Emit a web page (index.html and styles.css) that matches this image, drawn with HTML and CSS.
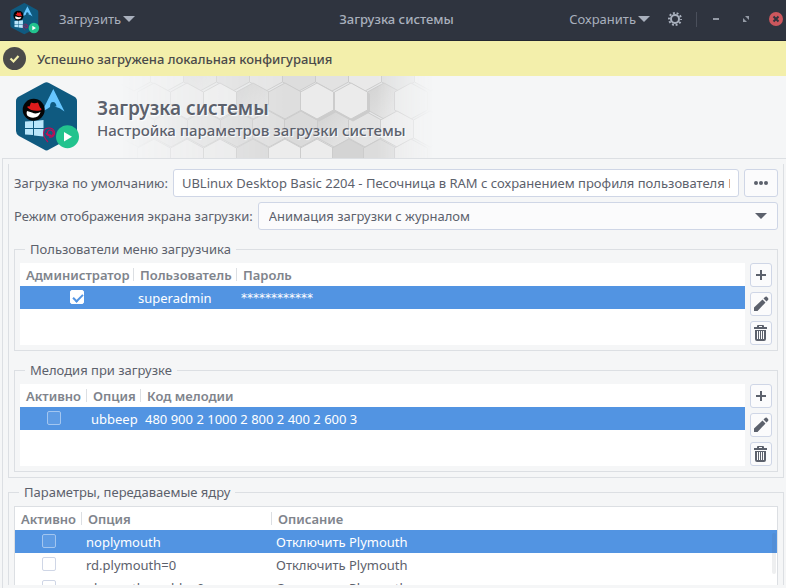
FILE: index.html
```html
<!DOCTYPE html>
<html lang="ru">
<head>
  <meta charset="UTF-8">
  <meta name="viewport" content="width=device-width, initial-scale=1.0">
  <title>Загрузка системы</title>
  <link rel="stylesheet" href="styles.css">
</head>
<body>
  <!-- shared symbols -->
  <svg class="symbols" aria-hidden="true">
    <symbol id="logo" viewBox="0 0 64 70">
      <path d="M28 1Q30.500 -0.500 33 1L58 14.500Q61 16 61 19V49Q61 52 58 54L33 67.500Q30.500 69.500 28 67.500L3 54Q0 52 0 49V19Q0 16 3 14.500Z" fill="#0f5a80"/>
      <path d="M37.300 7L26 29.500Q31 27.500 34 25Q34 20 37 20Q40 20 40.500 24.500L38.500 24.500Q44 25.500 48.500 29.500Z" fill="#66c6ff"/>
      <circle cx="17.700" cy="27.700" r="11" fill="#050505"/>
      <path d="M11 29Q9 34 15 35.500Q23 36.500 24.500 30Q20 32.500 16 30.500Z" fill="#fff"/>
      <path d="M11 25Q12 24 13.500 24.500L15 20.500Q18.500 22 22 20.500L24 25.500Q27 27.500 24 28.500Q16 30 11 25Z" fill="#e01b1b"/>
      <path d="M9 39.500L17 39V46H9ZM18 39L27.500 38V46H18ZM9 47H17V53L9 52.500ZM18 47H27.500V54.500L18 53.500Z" fill="#b9e6fb"/>
      <path d="M35 53Q31 53.500 31.500 50Q33 47 36 48.500Q38.500 51 36 53.500Q32 55 30 51M28 49Q29 45.500 34 46Q39 47 38.500 52Q37 56 33 55M28 49Q26 54 32 60" fill="none" stroke="#c70a53" stroke-width="1.100"/>
      <circle cx="51.500" cy="54.700" r="11.500" fill="#22c38e"/>
      <path d="M48 50V59.500L56 54.700Z" fill="#fff"/>
    </symbol>
    <symbol id="caret" viewBox="0 0 12 6">
      <path d="M0 0H12L6 6Z" fill="currentColor"/>
    </symbol>
    <symbol id="plus" viewBox="0 0 16 16">
      <path d="M7 3H9V7H13V9H9V13H7V9H3V7H7Z" fill="currentColor"/>
    </symbol>
    <symbol id="pencil" viewBox="0 0 16 16">
      <path d="M1 11.500L9.500 3.500L12.500 6.500L4.500 15H1ZM10.500 2.500L12 1Q13.500 0 14.500 1.500Q16 2.500 15 4L13.500 5.500Z" fill="currentColor"/>
    </symbol>
    <symbol id="trash" viewBox="0 0 16 16">
      <path d="M4 2V1Q4 0 5 0H10Q11 0 11 1V2H14V4H1V2ZM6 2H9V1H6ZM2 5H13V14Q13 16 11 16H4Q2 16 2 14ZM4 6V14H5V6ZM6 6V14H7V6ZM8 6V14H9V6ZM10 6V14H11V6Z" fill="currentColor" fill-rule="evenodd"/>
    </symbol>
  </svg>

  <header class="titlebar">
    <div class="titlebar-left">
      <svg class="logo-small" aria-hidden="true"><use href="#logo"/></svg>
      <button type="button" class="menu-btn">Загрузить<svg class="caret"><use href="#caret"/></svg></button>
    </div>
    <h1>Загрузка системы</h1>
    <div class="titlebar-right">
      <button type="button" class="menu-btn">Сохранить<svg class="caret"><use href="#caret"/></svg></button>
      <button type="button" class="icon-btn gear" aria-label="Настройки">
        <svg width="14" height="14" viewBox="0 0 14 14" fill="none" stroke="currentColor">
          <circle cx="7" cy="7" r="4" stroke-width="2"/>
          <circle cx="7" cy="7" r="6" stroke-width="2" stroke-dasharray="1.900 1.870" stroke-dashoffset="0.950"/>
        </svg>
      </button>
      <span class="divider"></span>
      <button type="button" class="icon-btn" aria-label="Свернуть">
        <svg width="14" height="14" viewBox="0 0 14 14"><path d="M4 6H10V8H4Z" fill="#949aa5"/></svg>
      </button>
      <button type="button" class="icon-btn" aria-label="Развернуть">
        <svg width="14" height="14" viewBox="0 0 14 14"><path d="M6 4H10V8ZM4 6L8 10H4Z" fill="#949aa5"/></svg>
      </button>
      <button type="button" class="icon-btn" aria-label="Закрыть">
        <svg width="14" height="14" viewBox="0 0 14 14">
          <circle cx="7" cy="7" r="7" fill="#cc575d"/>
          <path d="M4.500 4.500L9.500 9.500M9.500 4.500L4.500 9.500" stroke="#2f343f" stroke-width="2"/>
        </svg>
      </button>
    </div>
  </header>

  <div class="infobar" role="status">
    <svg width="23" height="23" viewBox="0 0 23 23" aria-hidden="true">
      <circle cx="11.500" cy="11.500" r="11.500" fill="#4a4a4a"/>
      <path d="M7.500 11.500L10.500 14.500L15.500 9" fill="none" stroke="#f3efab" stroke-width="2.200"/>
    </svg>
    <span>Успешно загружена локальная конфигурация</span>
  </div>

  <section class="banner">
    <svg class="honeycomb" width="330" height="82" viewBox="120 0 330 82" aria-hidden="true">
      <defs>
        <linearGradient id="fade">
          <stop offset="0" stop-color="#fff" stop-opacity="0"/>
          <stop offset="0.250" stop-color="#fff" stop-opacity="0.600"/>
          <stop offset="0.500" stop-color="#fff"/>
          <stop offset="0.780" stop-color="#fff"/>
          <stop offset="0.950" stop-color="#fff" stop-opacity="0"/>
        </linearGradient>
        <mask id="fadeMask"><rect x="120" y="0" width="330" height="82" fill="url(#fade)"/></mask>
        <linearGradient id="shade" x1="0" y1="0" x2="1" y2="1">
          <stop offset="0" stop-color="#d2d2d2"/>
          <stop offset="1" stop-color="#e6e6e6"/>
        </linearGradient>
        <path id="hex" d="M0 -18L16.500 -9V9L0 18L-16.500 9V-9Z" stroke="#cccccc"/>
      </defs>
      <g mask="url(#fadeMask)">
        <rect x="120" width="330" height="82" fill="#e6e7e8"/>
        <g fill="#e9e9e9">
          <use href="#hex" x="134" y="-3"/><use href="#hex" x="167" y="-3"/>
          <use href="#hex" x="200" y="-3" fill="url(#shade)"/><use href="#hex" x="233" y="-3" fill="#dedede"/>
          <use href="#hex" x="266" y="-3" fill="#e4e4e4"/><use href="#hex" x="299" y="-3" fill="#dddddd"/>
          <use href="#hex" x="332" y="-3" fill="#e2e2e2"/><use href="#hex" x="398" y="-3" fill="#dfe0e0"/>
          <use href="#hex" x="431" y="-3" fill="#eeeeee"/><use href="#hex" x="365" y="-3"/>
        </g>
        <g fill="#e8e8e8">
          <use href="#hex" x="154" y="25"/><use href="#hex" x="220" y="25" fill="#ebebeb"/>
          <use href="#hex" x="187" y="25"/><use href="#hex" x="253" y="25" fill="url(#shade)"/>
          <use href="#hex" x="285" y="25" fill="#dedede"/><use href="#hex" x="384" y="25" fill="url(#shade)"/>
          <use href="#hex" x="411" y="25" fill="#e8e9e9"/>
        </g>
        <g fill="#dedede">
          <use href="#hex" x="138" y="53"/><use href="#hex" x="171" y="53"/><use href="#hex" x="204" y="53"/>
          <use href="#hex" x="237" y="53" fill="#dadada"/><use href="#hex" x="269" y="53"/>
          <use href="#hex" x="301" y="53" fill="#dadada"/><use href="#hex" x="334" y="53" fill="url(#shade)"/>
          <use href="#hex" x="365" y="53" fill="#e3e3e3"/><use href="#hex" x="397" y="53" fill="#eaeaea"/>
          <use href="#hex" x="430" y="53" fill="#f0f0f0"/>
        </g>
        <g fill="#e9e9e9">
          <use href="#hex" x="154" y="81"/><use href="#hex" x="187" y="81"/><use href="#hex" x="220" y="81"/>
          <use href="#hex" x="253" y="81" fill="#dadada"/><use href="#hex" x="285" y="81" fill="#ececec"/>
          <use href="#hex" x="317" y="81" fill="#ececec"/><use href="#hex" x="349" y="81" fill="#d4d4d4"/>
          <use href="#hex" x="380" y="81" fill="#dcdcdc"/><use href="#hex" x="411" y="81"/>
        </g>
        <!-- raised tiles -->
        <g fill="#ebebeb">
          <use href="#hex" x="319" y="27" fill="#cccccc"/><use href="#hex" x="317" y="25"/>
          <use href="#hex" x="353" y="27" fill="#cccccc"/><use href="#hex" x="351" y="25"/>
        </g>
      </g>
    </svg>
    <svg class="logo-large" aria-hidden="true"><use href="#logo"/></svg>
    <div class="banner-text">
      <h2>Загрузка системы</h2>
      <p>Настройка параметров загрузки системы</p>
    </div>
  </section>

  <main class="content">
    <div class="scroller">
      <section class="panel">
        <div class="field">
          <label for="default-boot">Загрузка по умолчанию:</label>
          <input type="text" id="default-boot" value="UBLinux Desktop Basic 2204 - Песочница в RAM с сохранением профиля пользователя HDD">
          <button type="button" class="btn more" aria-label="Выбрать">
            <svg width="14" height="4" viewBox="0 0 14 4" fill="currentColor"><circle cx="2" cy="2" r="2"/><circle cx="7" cy="2" r="2"/><circle cx="12" cy="2" r="2"/></svg>
          </button>
        </div>
        <div class="field">
          <label for="splash-mode">Режим отображения экрана загрузки:</label>
          <div class="select">
            <select id="splash-mode">
              <option>Анимация загрузки с журналом</option>
            </select>
            <svg class="caret"><use href="#caret"/></svg>
          </div>
        </div>

        <fieldset>
          <legend>Пользователи меню загрузчика</legend>
          <div class="list">
            <div class="list-view">
              <table>
                <colgroup><col class="col-admin"><col class="col-user"><col></colgroup>
                <thead>
                  <tr><th>Администратор</th><th>Пользователь</th><th>Пароль</th></tr>
                </thead>
                <tbody>
                  <tr class="selected">
                    <td class="check"><input type="checkbox" aria-label="Администратор" checked></td>
                    <td>superadmin</td>
                    <td class="password">************</td>
                  </tr>
                </tbody>
              </table>
            </div>
            <div class="list-actions">
              <button type="button" class="btn" aria-label="Добавить"><svg><use href="#plus"/></svg></button>
              <button type="button" class="btn" aria-label="Изменить"><svg><use href="#pencil"/></svg></button>
              <button type="button" class="btn" aria-label="Удалить"><svg><use href="#trash"/></svg></button>
            </div>
          </div>
        </fieldset>

        <fieldset>
          <legend>Мелодия при загрузке</legend>
          <div class="list">
            <div class="list-view">
              <table>
                <colgroup><col class="col-active"><col class="col-option"><col></colgroup>
                <thead>
                  <tr><th>Активно</th><th>Опция</th><th>Код мелодии</th></tr>
                </thead>
                <tbody>
                  <tr class="selected">
                    <td class="check"><input type="checkbox" aria-label="Активно"></td>
                    <td>ubbeep</td>
                    <td>480 900 2 1000 2 800 2 400 2 600 3</td>
                  </tr>
                </tbody>
              </table>
            </div>
            <div class="list-actions">
              <button type="button" class="btn" aria-label="Добавить"><svg><use href="#plus"/></svg></button>
              <button type="button" class="btn" aria-label="Изменить"><svg><use href="#pencil"/></svg></button>
              <button type="button" class="btn" aria-label="Удалить"><svg><use href="#trash"/></svg></button>
            </div>
          </div>
        </fieldset>
      </section>

      <fieldset class="kernel">
        <legend>Параметры, передаваемые ядру</legend>
        <div class="list-view framed">
          <table>
            <colgroup><col class="col-active"><col class="col-kernel"><col></colgroup>
            <thead>
              <tr><th>Активно</th><th>Опция</th><th>Описание</th></tr>
            </thead>
            <tbody>
              <tr class="selected">
                <td class="check"><input type="checkbox" aria-label="noplymouth"></td>
                <td>noplymouth</td>
                <td>Отключить Plymouth</td>
              </tr>
              <tr>
                <td class="check"><input type="checkbox" aria-label="rd.plymouth=0"></td>
                <td>rd.plymouth=0</td>
                <td>Отключить Plymouth</td>
              </tr>
              <tr>
                <td class="check"><input type="checkbox" aria-label="plymouth.enable=0"></td>
                <td>plymouth.enable=0</td>
                <td>Отключить Plymouth</td>
              </tr>
            </tbody>
          </table>
          <span class="scroll-thumb"></span>
        </div>
      </fieldset>
    </div>
  </main>
</body>
</html>
```
FILE: styles.css
```css
* {
  margin: 0;
  padding: 0;
  box-sizing: border-box;
}

body {
  font-family: "Noto Sans", sans-serif;
  font-size: 13px;
  line-height: 18px;
  color: #5c616c;
  background-color: #f5f6f7;
  display: flex;
  flex-direction: column;
  height: 100vh;
  overflow: hidden;
}

svg {
  display: block;
  flex-shrink: 0;
}

button, input, select {
  font: inherit;
  color: inherit;
}

button {
  border: none;
  background: none;
  cursor: pointer;
}

.symbols {
  position: absolute;
  width: 0;
  height: 0;
}

.caret {
  width: 12px;
  height: 6px;
}

/* title bar */
.titlebar {
  display: grid;
  grid-template-columns: 1fr auto 1fr;
  align-items: center;
  flex-shrink: 0;
  height: 41px;
  padding: 0 3px 2px 10px;
  background-color: #2f343f;
  border-bottom: 1px solid #232730;
  color: #a9b0bd;
}

.titlebar h1 {
  font-size: 13px;
  font-weight: 500;
}

.titlebar-left, .titlebar-right {
  display: flex;
  align-items: center;
}

.titlebar-right {
  justify-content: flex-end;
  gap: 16px;
}

.logo-small {
  width: 30px;
  height: 32px;
  margin-right: 19px;
}

.menu-btn {
  display: flex;
  align-items: center;
  gap: 2px;
}

.gear {
  margin-left: 2px;
}

.divider {
  width: 1px;
  height: 15px;
  margin: 0 -4px 0 -2px;
  background-color: #4a4f5b;
}

/* message bar */
.infobar {
  display: flex;
  align-items: center;
  flex-shrink: 0;
  gap: 11px;
  height: 35px;
  padding-left: 3px;
  background-color: #f3efab;
  color: #4a4a4a;
  font-weight: 500;
}

/* banner */
.banner {
  position: relative;
  display: flex;
  align-items: center;
  flex-shrink: 0;
  gap: 17px;
  height: 82px;
  padding-left: 16px;
}

.honeycomb {
  position: absolute;
  left: 120px;
  top: 0;
}

.logo-large {
  width: 64px;
  height: 70px;
  position: relative;
}

.banner-text {
  position: relative;
  padding-top: 2px;
  text-shadow: 1px 1px 1px #fff;
  font-weight: 500;
}

.banner-text h2 {
  font-size: 19px;
  line-height: 24px;
  font-weight: 600;
}

.banner-text p {
  font-size: 15px;
  line-height: 20px;
}

/* main area */
.content {
  flex: 1;
  min-height: 0;
  display: flex;
  margin-left: 2px;
  padding: 5px 2px 3px 5px;
  border: solid #dcdfe3;
  border-width: 1px 0 0 1px;
}

.scroller {
  flex: 1;
  min-width: 0;
  overflow: hidden;
}

.panel {
  display: flex;
  flex-direction: column;
  gap: 5px;
  padding: 5px;
  border: 1px solid #dcdfe3;
  border-top: none;
}

.field {
  display: flex;
  align-items: center;
  gap: 5px;
}

.field label {
  white-space: nowrap;
}

.field input, .field select, .btn {
  border: 1px solid #cfd6e6;
  border-radius: 3px;
  background-color: #fbfbfc;
}

.field input, .field select {
  width: 100%;
  height: 28px;
  outline: none;
}

.field input {
  flex: 1;
  min-width: 0;
  padding: 0 8px;
  background-color: #fff;
}

.select {
  position: relative;
  flex: 1;
}

.field select {
  appearance: none;
  padding: 0 10px;
}

.select .caret {
  position: absolute;
  right: 11px;
  top: 11px;
  pointer-events: none;
}

.btn {
  display: flex;
  align-items: center;
  justify-content: center;
}

.more {
  width: 34px;
  height: 28px;
}

fieldset {
  min-width: 0;
  padding: 5px;
  border: 1px solid #dcdfe3;
}

.panel fieldset {
  margin-top: 5px;
}

legend {
  margin-left: 5px;
  padding: 0 5px;
}

/* lists */
.list {
  display: flex;
  gap: 5px;
}

.list-view {
  position: relative;
  flex: 1;
  min-width: 0;
  background-color: #fff;
}

.list-actions {
  display: flex;
  flex-direction: column;
  gap: 5px;
}

.list-actions .btn {
  width: 22px;
  height: 24px;
}

.list-actions svg {
  width: 16px;
  height: 16px;
}

table {
  width: 100%;
  table-layout: fixed;
  border-collapse: collapse;
}

th {
  height: 23px;
  padding: 0 6px;
  text-align: left;
  font-weight: 600;
  color: #80848c;
  white-space: nowrap;
  background: linear-gradient(#dcdfe3, #dcdfe3) right center / 1px 13px no-repeat;
}

th:last-child {
  background: none;
}

td {
  height: 23px;
  padding: 0 4px;
  white-space: nowrap;
}

.selected {
  background-color: #5294e2;
  color: #fff;
}

.password {
  font-family: "DejaVu Sans", sans-serif;
  font-size: 12px;
}

.check {
  text-align: center;
}

.check input {
  appearance: none;
  display: block;
  width: 14px;
  height: 14px;
  margin: -2px auto 0;
  border: 1px solid #cfd6e6;
  border-radius: 2px;
  background-color: #fff;
}

.selected .check input {
  border-color: #a3c6f0;
  background-color: #5f9ce4;
}

.selected .check input:checked {
  border-color: #fff;
  background-color: #fff;
}

.check input:checked::before {
  content: "";
  display: block;
  width: 8px;
  height: 4px;
  margin: 3px 2px;
  border: solid #5294e2;
  border-width: 0 0 2px 2px;
  transform: rotate(-45deg);
}

.col-admin {
  width: 114px;
}

.col-user {
  width: 103px;
}

.col-active {
  width: 67px;
}

.col-option {
  width: 54px;
}

.col-kernel {
  width: 190px;
}

.kernel {
  margin-top: 5px;
}

.framed {
  border: 1px solid #dcdfe3;
}

.scroll-thumb {
  position: absolute;
  top: 26px;
  right: 1px;
  width: 4px;
  height: 41px;
  border-radius: 2px;
  background-color: rgba(92, 97, 108, 0.1);
}
```
